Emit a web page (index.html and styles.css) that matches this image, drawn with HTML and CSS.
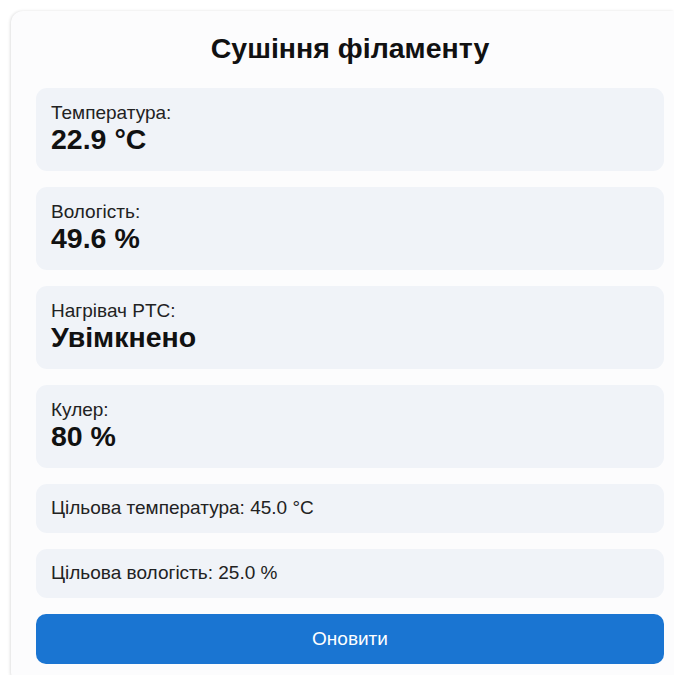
FILE: index.html
```html
<!DOCTYPE html>
<html lang="uk">
<head>
<meta charset="utf-8">
<title>Сушіння філаменту</title>
<link rel="stylesheet" href="styles.css">
</head>
<body>
<main class="card">
  <h1 class="title">Сушіння філаменту</h1>
  <section class="stat">
    <div class="stat-label">Температура:</div>
    <div class="stat-value">22.9 °C</div>
  </section>
  <section class="stat">
    <div class="stat-label">Вологість:</div>
    <div class="stat-value">49.6 %</div>
  </section>
  <section class="stat">
    <div class="stat-label">Нагрівач PTC:</div>
    <div class="stat-value">Увімкнено</div>
  </section>
  <section class="stat">
    <div class="stat-label">Кулер:</div>
    <div class="stat-value">80 %</div>
  </section>
  <section class="stat stat-inline">Цільова температура: 45.0 °C</section>
  <section class="stat stat-inline">Цільова вологість: 25.0 %</section>
  <button class="refresh" type="button">Оновити</button>
</main>
</body>
</html>
```
FILE: styles.css
```css
html, body {
  margin: 0;
  overflow: hidden;
  background: #ffffff;
}

body {
  padding: 11px 0 0 11px;
  font-family: "Liberation Sans", Arial, sans-serif;
  color: #1a1a1a;
}

.card {
  padding: 17px 10px 20px 25px;
  background: #fcfcfd;
  border-radius: 12px 0 0 12px;
  box-shadow: -1px 0 3px rgba(0, 0, 0, 0.12);
  display: flex;
  flex-direction: column;
  gap: 16px;
}

.title {
  margin: 0 0 4px;
  text-align: center;
  font-size: 28.5px;
  line-height: 40px;
  font-weight: 700;
  color: #111;
}

.stat {
  background: #f0f3f8;
  border-radius: 11px;
  padding: 15px 15px 15px;
}

.stat-label {
  font-size: 19px;
  line-height: 20px;
  color: #222;
}

.stat-value {
  font-size: 28.5px;
  line-height: 33px;
  font-weight: 700;
  color: #111;
}

.stat-inline {
  font-size: 19px;
  line-height: 20px;
  padding: 14px 15px 15px;
  color: #222;
}

.refresh {
  height: 50px;
  border: 0;
  border-radius: 10px;
  background: #1a75d2;
  color: #fff;
  font-family: inherit;
  font-size: 19px;
  cursor: pointer;
}
```
